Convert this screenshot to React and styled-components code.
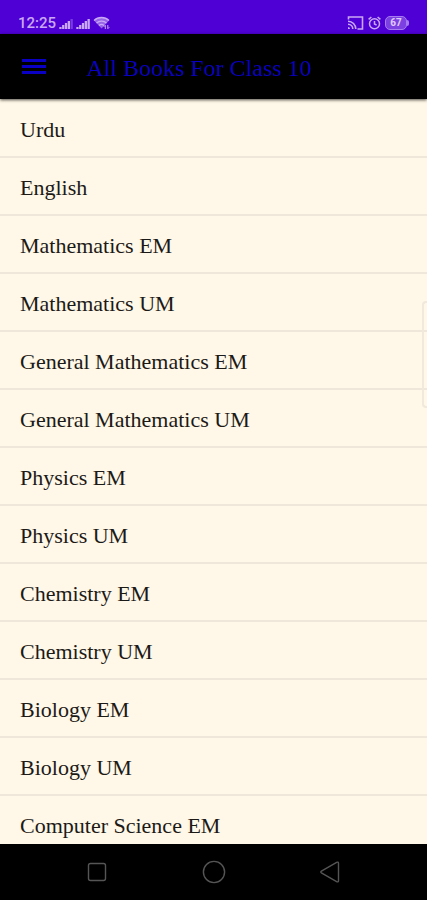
import React from 'react'
import styled, { createGlobalStyle } from 'styled-components'

const books = [
  'Urdu',
  'English',
  'Mathematics EM',
  'Mathematics UM',
  'General Mathematics EM',
  'General Mathematics UM',
  'Physics EM',
  'Physics UM',
  'Chemistry EM',
  'Chemistry UM',
  'Biology EM',
  'Biology UM',
  'Computer Science EM',
]

const SignalIcon = ({ level }) => (
  <svg width='14' height='12' viewBox='0 0 14 12' fill='currentColor'>
    {[2, 4, 6, 8, 10].map((height, index) => (
      <rect
        key={height}
        x={index * 2.8 + 0.3}
        y={12 - height}
        width='2.3'
        height={height}
        opacity={index < level ? 1 : 0.35}
      />
    ))}
  </svg>
)

const WifiIcon = () => (
  <svg width='17' height='14' viewBox='0 0 17 14' fill='none'>
    <path d='M1 4.5C5 0.5 12 0.5 16 4.5L8.5 12.5Z' fill='currentColor' opacity='0.6' />
    <path
      d='M1 4.5C5 0.5 12 0.5 16 4.5M3.5 7C6.3 4.4 10.7 4.4 13.5 7M6 9.5C7.4 8.2 9.6 8.2 11 9.5'
      stroke='currentColor'
      strokeWidth='1.3'
    />
    <path d='M12.3 13V9.3M10.8 10.8l1.5-1.5M14.8 9V12.7M16.3 11.2L14.8 12.7' stroke='currentColor' />
  </svg>
)

const CastIcon = () => (
  <svg width='17' height='14' viewBox='0 0 17 14' fill='none' stroke='currentColor' strokeWidth='1.6'>
    <path d='M1.5 3.5V1H15.5V13H10.5' />
    <path d='M1 5.2A7.8 7.8 0 0 1 8.8 13M1 8.2A4.8 4.8 0 0 1 5.8 13' />
    <path d='M1 11A2 2 0 0 1 3 13H1Z' fill='currentColor' stroke='none' />
  </svg>
)

const AlarmIcon = () => (
  <svg width='13' height='14' viewBox='0 0 13 14' fill='none' stroke='currentColor' strokeWidth='1.5'>
    <circle cx='6.5' cy='7.8' r='5' />
    <path d='M6.5 5V8L8.6 9.2M0.6 3.4L3.4 1M12.4 3.4L9.6 1' />
  </svg>
)

const App = () => {
  return (
    <>
      <GlobalStyle />
      <Screen>
        <StatusBar>
          <StatusGroup $gap='3px'>
            <Clock>12:25</Clock>
            <SignalIcon level={4} />
            <SignalIcon level={5} />
            <WifiIcon />
          </StatusGroup>
          <StatusGroup $gap='4px'>
            <CastIcon />
            <AlarmIcon />
            <Battery>67</Battery>
          </StatusGroup>
        </StatusBar>
        <AppBar>
          <MenuButton type='button' aria-label='Open menu'>
            <span />
            <span />
            <span />
          </MenuButton>
          <Title>All Books For Class 10</Title>
        </AppBar>
        <Content>
          <BookList>
            {books.map((book) => (
              <BookItem key={book}>
                <BookLink href='#'>{book}</BookLink>
              </BookItem>
            ))}
          </BookList>
        </Content>
        <EdgeHandle />
        <NavBar>
          <NavButton type='button' aria-label='Recent apps'>
            <svg width='24' height='24' viewBox='0 0 24 24'>
              <rect x='3.5' y='3.5' width='17' height='17' rx='2' />
            </svg>
          </NavButton>
          <NavButton type='button' aria-label='Home'>
            <svg width='24' height='24' viewBox='0 0 24 24'>
              <circle cx='12' cy='12' r='10.6' />
            </svg>
          </NavButton>
          <NavButton type='button' aria-label='Back'>
            <svg width='24' height='24' viewBox='0 0 24 24'>
              <path d='M3.4 11.2L18.6 2.3Q20.3 1.6 20.5 3.2V20.8Q20.3 22.4 18.6 21.7L3.4 12.8Q2.2 12 3.4 11.2Z' />
            </svg>
          </NavButton>
        </NavBar>
      </Screen>
    </>
  )
}

const GlobalStyle = createGlobalStyle`
  * {
    box-sizing: border-box;
    margin: 0;
    padding: 0;
  }
  body {
    background: #fff7e7;
    font-family: 'Liberation Serif', 'Times New Roman', serif;
  }
  button {
    background: none;
    border: none;
    cursor: pointer;
  }
`

const Screen = styled.div`
  position: relative;
  display: flex;
  flex-direction: column;
  height: 100vh;
  overflow: hidden;
`

const StatusBar = styled.div`
  display: flex;
  justify-content: space-between;
  flex-shrink: 0;
  height: 34px;
  padding: 12px 18px 0;
  background: #4f00d4;
  color: #c9a8f5;
`

const StatusGroup = styled.div`
  display: flex;
  align-items: center;
  gap: ${(props) => props.$gap};
  height: 22px;
`

const Clock = styled.span`
  font-family: Roboto, sans-serif;
  font-size: 15px;
  font-weight: 500;
`

const Battery = styled.span`
  position: relative;
  width: 22px;
  height: 14px;
  border: 1px solid #a67cf0;
  border-radius: 5px;
  background: #7c40e2;
  color: #e0ccfa;
  font-family: Roboto, sans-serif;
  font-size: 10px;
  font-weight: 700;
  line-height: 12px;
  text-align: center;
  margin-right: 2px;
  &::after {
    content: '';
    position: absolute;
    top: 3px;
    right: -3px;
    width: 2px;
    height: 6px;
    border-radius: 0 2px 2px 0;
    background: #a67cf0;
  }
`

const AppBar = styled.header`
  position: relative;
  z-index: 1;
  display: flex;
  align-items: center;
  flex-shrink: 0;
  gap: 40px;
  height: 65px;
  padding: 0 22px;
  background: #000;
  color: #0a00c4;
  box-shadow: 0 1px 3px rgba(0, 0, 0, 0.7);
`

const MenuButton = styled.button`
  display: grid;
  gap: 3px;
  width: 24px;
  span {
    height: 3px;
    background: #0a00c4;
  }
`

const Title = styled.h1`
  padding-top: 2px;
  font-size: 24px;
  font-weight: 400;
  line-height: 28px;
  white-space: nowrap;
`

const Content = styled.main`
  flex: 1;
  min-height: 0;
  overflow-y: auto;
  scrollbar-width: none;
  background: #fff7e7;
`

const BookList = styled.ul`
  padding-top: 1px;
  list-style: none;
`

const BookItem = styled.li`
  border-bottom: 2px solid #efe7d9;
`

const BookLink = styled.a`
  display: block;
  padding: 17px 20px 13px;
  color: #1c1a17;
  font-size: 22px;
  line-height: 26px;
  text-decoration: none;
`

const EdgeHandle = styled.div`
  position: absolute;
  top: 301px;
  right: 0;
  width: 5px;
  height: 107px;
  border: 2px solid #f1e9db;
  border-right: none;
  border-radius: 4px 0 0 4px;
`

const NavBar = styled.nav`
  display: flex;
  justify-content: space-between;
  align-items: center;
  flex-shrink: 0;
  height: 56px;
  padding: 0 20%;
  background: #000;
`

const NavButton = styled.button`
  display: flex;
  svg {
    fill: none;
    stroke: #555;
    stroke-width: 1.4;
  }
`

export default App
